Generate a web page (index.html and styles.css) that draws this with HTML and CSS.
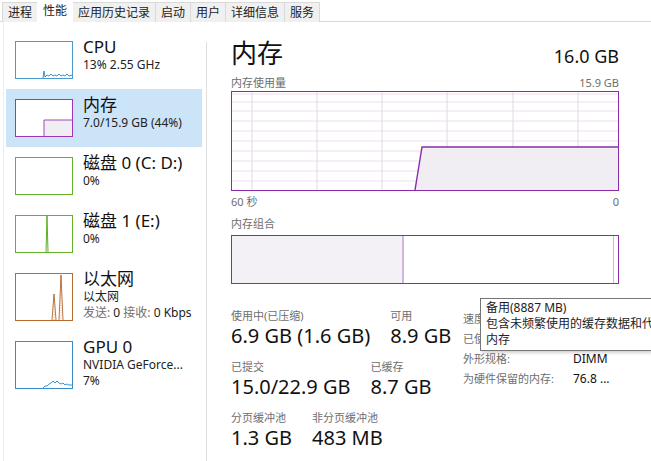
FILE: index.html
```html
<!DOCTYPE html>
<html lang="zh-CN">
<head>
    <meta charset="utf-8">
    <title>任务管理器 - 性能</title>
    <link rel="stylesheet" href="styles.css">
</head>
<body>
    <nav class="tabs">
        <span class="tab">进程</span>
        <span class="tab active">性能</span>
        <span class="tab">应用历史记录</span>
        <span class="tab">启动</span>
        <span class="tab">用户</span>
        <span class="tab">详细信息</span>
        <span class="tab">服务</span>
    </nav>

    <div class="panel">
        <aside class="sidebar">
            <div class="item">
                <div class="thumb cpu">
                    <svg viewBox="0 0 56 36" preserveAspectRatio="none">
                        <polyline points="27,36 28,29 29,35 31,33 33,34 35,32 37,34 39,33 41,34 43,32 45,34 47,33 49,34 51,32 53,34 56,33" />
                    </svg>
                </div>
                <div class="info">
                    <div class="name">CPU</div>
                    <div class="sub">13% 2.55 GHz</div>
                </div>
            </div>

            <div class="item selected">
                <div class="thumb mem">
                    <svg viewBox="0 0 56 36" preserveAspectRatio="none">
                        <polygon points="28,36 28,20 56,20 56,36" />
                        <polyline points="28,36 28,20 56,20" />
                    </svg>
                </div>
                <div class="info">
                    <div class="name">内存</div>
                    <div class="sub">7.0/15.9 GB (44%)</div>
                </div>
            </div>

            <div class="item">
                <div class="thumb disk"></div>
                <div class="info">
                    <div class="name">磁盘 0 (C: D:)</div>
                    <div class="sub">0%</div>
                </div>
            </div>

            <div class="item">
                <div class="thumb disk">
                    <svg viewBox="0 0 56 36" preserveAspectRatio="none">
                        <polyline points="30,36 31,0 32,36" />
                    </svg>
                </div>
                <div class="info">
                    <div class="name">磁盘 1 (E:)</div>
                    <div class="sub">0%</div>
                </div>
            </div>

            <div class="item">
                <div class="thumb net tall">
                    <svg viewBox="0 0 56 46" preserveAspectRatio="none">
                        <line class="dots" x1="38" y1="20" x2="38" y2="46" />
                        <line class="dots" x1="45" y1="1" x2="45" y2="46" />
                        <polyline points="36,46 38,20 40,46" />
                        <polyline points="43,46 45,1 47,46" />
                    </svg>
                </div>
                <div class="info">
                    <div class="name">以太网</div>
                    <div class="sub">以太网</div>
                    <div class="sub"><span class="muted">发送:</span> 0 <span class="muted">接收:</span> 0 Kbps</div>
                </div>
            </div>

            <div class="item">
                <div class="thumb gpu tall">
                    <svg viewBox="0 0 56 46" preserveAspectRatio="none">
                        <polyline points="27,46 29,44 31,44 33,42 35,41 37,39 39,41 41,39 43,41 45,42 47,41 49,43 51,42 53,43 56,43" />
                    </svg>
                </div>
                <div class="info">
                    <div class="name">GPU 0</div>
                    <div class="sub">NVIDIA GeForce...</div>
                    <div class="sub">7%</div>
                </div>
            </div>
        </aside>

        <main class="detail">
            <header class="head">
                <h1>内存</h1>
                <span class="total">16.0 GB</span>
            </header>

            <div class="caption"><span>内存使用量</span><span>15.9 GB</span></div>
            <div class="graph">
                <svg viewBox="0 0 386 98" preserveAspectRatio="none">
                    <g class="hgrid">
                        <line x1="0" y1="2" x2="386" y2="2" />
                        <line x1="0" y1="10" x2="386" y2="10" />
                        <line x1="0" y1="19" x2="386" y2="19" />
                        <line x1="0" y1="29" x2="386" y2="29" />
                        <line x1="0" y1="39" x2="386" y2="39" />
                        <line x1="0" y1="49" x2="386" y2="49" />
                        <line x1="0" y1="59" x2="386" y2="59" />
                        <line x1="0" y1="69" x2="386" y2="69" />
                        <line x1="0" y1="79" x2="386" y2="79" />
                        <line x1="0" y1="89" x2="386" y2="89" />
                    </g>
                    <g class="vgrid">
                        <line x1="20" y1="0" x2="20" y2="98" />
                        <line x1="85" y1="0" x2="85" y2="98" />
                        <line x1="150" y1="0" x2="150" y2="98" />
                        <line x1="215" y1="0" x2="215" y2="98" />
                        <line x1="281" y1="0" x2="281" y2="98" />
                        <line x1="346" y1="0" x2="346" y2="98" />
                    </g>
                    <polygon class="area" points="183,98 190,55 386,55 386,98" />
                    <polyline class="edge" points="183,98 190,55 386,55" />
                </svg>
            </div>
            <div class="caption axis"><span>60 秒</span><span>0</span></div>

            <div class="caption combo-title">内存组合</div>
            <div class="combo">
                <div class="seg used"></div>
                <div class="seg standby"></div>
                <div class="seg modified"></div>
            </div>

            <section class="stats">
                <div class="stats-main">
                    <div class="stat-row">
                        <div class="stat">
                            <div class="label">使用中(已压缩)</div>
                            <div class="value">6.9 GB (1.6 GB)</div>
                        </div>
                        <div class="stat">
                            <div class="label">可用</div>
                            <div class="value">8.9 GB</div>
                        </div>
                    </div>
                    <div class="stat-row">
                        <div class="stat">
                            <div class="label">已提交</div>
                            <div class="value">15.0/22.9 GB</div>
                        </div>
                        <div class="stat">
                            <div class="label">已缓存</div>
                            <div class="value">8.7 GB</div>
                        </div>
                    </div>
                    <div class="stat-row">
                        <div class="stat">
                            <div class="label">分页缓冲池</div>
                            <div class="value">1.3 GB</div>
                        </div>
                        <div class="stat">
                            <div class="label">非分页缓冲池</div>
                            <div class="value">483 MB</div>
                        </div>
                    </div>
                </div>

                <div class="props">
                    <div class="prop"><span class="key">速度:</span><span class="val">2400 MHz</span></div>
                    <div class="prop"><span class="key">已使用的插槽:</span><span class="val">2/4</span></div>
                    <div class="prop"><span class="key">外形规格:</span><span class="val">DIMM</span></div>
                    <div class="prop"><span class="key">为硬件保留的内存:</span><span class="val">76.8 ...</span></div>
                </div>
            </section>

            <div class="tooltip">
                <div>备用(8887 MB)</div>
                <div>包含未频繁使用的缓存数据和代码的内存</div>
                <div>内存</div>
            </div>
        </main>
    </div>
</body>
</html>
```

FILE: styles.css
```css
body {
    margin: 0;
    width: 651px;
    height: 461px;
    overflow: hidden;
    background-color: white;
    color: #1a1a1a;
    font-family: "Noto Sans", "Noto Sans CJK SC", sans-serif;
}

/* tab strip */

.tabs {
    display: flex;
    align-items: flex-end;
    height: 22px;
    padding-left: 2px;
    border-bottom: 1px solid #d9d9d9;
    box-sizing: border-box;
}

.tab {
    height: 20px;
    padding: 0 5px;
    margin-right: -1px;
    margin-bottom: -1px;
    border: 1px solid #d9d9d9;
    border-bottom: none;
    background-color: #f0f0f0;
    font-size: 12px;
    line-height: 19px;
    color: #222;
    box-sizing: border-box;
}

.tab.active {
    position: relative;
    height: 23px;
    padding-top: 1px;
    background-color: white;
    border-color: white;
    z-index: 1;
}

/* main panel */

.panel {
    display: flex;
    height: 439px;
    margin-left: 3px;
    border-left: 1px solid #ececec;
}

.sidebar {
    width: 202px;
    padding-top: 9px;
    background: linear-gradient(#dedede, #dedede) right 20px / 1px 100% no-repeat;
    padding-right: 1px;
}

.item {
    display: flex;
    align-items: flex-start;
    gap: 10px;
    margin: 0 4px 0 2px;
    padding: 10px 0 10px 9px;
}

.item.selected {
    background-color: #cce4f7;
}

.thumb {
    width: 58px;
    height: 38px;
    flex: none;
    border: 1px solid;
    background-color: white;
    box-sizing: border-box;
}

.thumb.tall {
    height: 48px;
}

.thumb svg {
    display: block;
    width: 100%;
    height: 100%;
    fill: none;
    stroke-width: 0.9;
}

.thumb.cpu { border-color: #4a9ad0; stroke: #2b86c2; }
.thumb.mem { border-color: #9b36bb; stroke: #9b36bb; }
.thumb.mem polygon { fill: #f1eef3; stroke: none; }
.thumb.disk { border-color: #66b12a; stroke: #4da60c; }
.thumb.net { border-color: #b86c2c; stroke: #b5652a; }
.thumb.net .dots { stroke: #d9a27a; stroke-dasharray: 1 1.5; }
.thumb.gpu { border-color: #3b8cc4; stroke: #2b86c2; }

.info {
    margin-top: -5px;
    white-space: nowrap;
}

.name {
    font-size: 17px;
    line-height: 21px;
    color: #111;
}

.sub {
    font-size: 12px;
    line-height: 16px;
    color: #222;
}

.muted {
    color: #707070;
}

/* memory detail */

.detail {
    position: relative;
    width: 388px;
    padding: 15px 0 0 24px;
}

.head {
    display: flex;
    justify-content: space-between;
    align-items: baseline;
    margin-bottom: 7px;
}

.head h1 {
    margin: 0;
    font-size: 26px;
    font-weight: normal;
    line-height: 32px;
    color: #111;
}

.total {
    font-size: 18px;
    color: #111;
}

.caption {
    display: flex;
    justify-content: space-between;
    font-size: 11px;
    line-height: 14px;
    color: #6e6e6e;
}

.graph {
    height: 100px;
    margin-top: 1px;
    border: 1px solid #8b2bab;
    box-sizing: border-box;
}

.graph svg {
    display: block;
    width: 100%;
    height: 100%;
}

.hgrid line { stroke: #f1dcee; stroke-width: 1; }
.vgrid line { stroke: #e2d6e6; stroke-width: 1; }
.graph .area { fill: #f1eef3; }
.graph .edge { fill: none; stroke: #8b2bab; stroke-width: 1.4; }

.axis {
    margin-top: 4px;
}

.combo-title {
    margin-top: 8px;
}

.combo {
    display: flex;
    height: 49px;
    margin-top: 4px;
    border: 1px solid #8b2bab;
    box-sizing: border-box;
}

.seg.used {
    width: 170px;
    background-color: #f3f1f5;
    border-right: 2px solid #d3b4de;
}

.seg.standby {
    flex: 1;
}

.seg.modified {
    width: 4px;
    border-left: 1px solid #d3b4de;
}

.stats {
    display: flex;
    margin-top: 25px;
}

.stats-main {
    flex: none;
    width: 232px;
}

.stat-row {
    display: flex;
    gap: 20px;
    margin-bottom: 11px;
    white-space: nowrap;
}

.label {
    font-size: 11px;
    line-height: 14px;
    color: #6e6e6e;
}

.value {
    font-size: 20px;
    line-height: 26px;
    color: #111;
}

.props {
    white-space: nowrap;
}

.prop {
    display: flex;
    font-size: 11px;
    line-height: 20px;
}

.key {
    width: 110px;
    color: #6e6e6e;
}

.val {
    font-size: 12px;
    color: #111;
}

/* hover tooltip over the composition bar, clipped by the window edge */

.tooltip {
    position: absolute;
    left: 273px;
    top: 276px;
    width: 171px;
    overflow: hidden;
    padding: 1px 0 2px 5px;
    border: 1px solid #767676;
    border-right: none;
    background-color: white;
    box-shadow: 2px 2px 3px rgba(0, 0, 0, 0.18);
    font-size: 12px;
    line-height: 16px;
    color: #222;
    white-space: nowrap;
    box-sizing: border-box;
    z-index: 2;
}
```
